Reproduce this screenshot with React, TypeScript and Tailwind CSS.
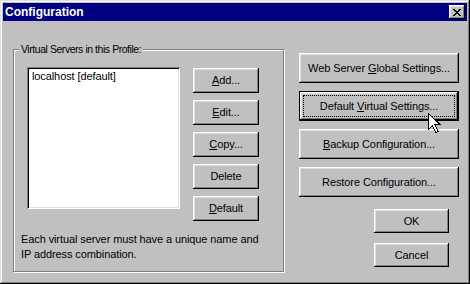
import React from "react";

const bevel =
  "shadow-[inset_-1px_-1px_#000,inset_1px_1px_#fff,inset_-2px_-2px_#808080,inset_2px_2px_#dfdfdf]";

function Btn({
  children,
  className = "",
}: {
  children: React.ReactNode;
  className?: string;
}) {
  return (
    <button
      className={`flex items-center justify-center bg-[#c0c0c0] text-black ${bevel} ${className}`}
    >
      {children}
    </button>
  );
}

function Cursor() {
  return (
    <svg
      className="absolute left-[428px] top-[113px]"
      width="13"
      height="21"
      viewBox="0 0 13 21"
    >
      <path
        d="M0.5 0.5 L0.5 16.5 L4.5 12.5 L7.5 19.5 L10 18.5 L7 11.5 L12 11.5 Z"
        fill="#fff"
        stroke="#000"
        strokeWidth="1"
        shapeRendering="crispEdges"
      />
    </svg>
  );
}

export default function App() {
  return (
    <div
      className="relative w-[470px] h-[284px] bg-[#c0c0c0] p-[3px] text-[11px] tracking-[-0.1px] text-black shadow-[inset_-1px_-1px_#000,inset_1px_1px_#dfdfdf,inset_-2px_-2px_#808080,inset_2px_2px_#fff]"
      style={{ fontFamily: '"Liberation Sans", Arial, sans-serif' }}
    >
      {/* Title bar */}
      <div className="flex h-[18px] items-center justify-between bg-[#000080] pl-[2px] pr-[2px]">
        <span className="text-[12px] font-bold tracking-normal text-white">Configuration</span>
        <button
          className={`flex h-[14px] w-[16px] items-center justify-center bg-[#c0c0c0] ${bevel}`}
        >
          <svg width="8" height="7" viewBox="0 0 8 7" shapeRendering="crispEdges">
            <path
              d="M0 0h2v1h-2zM6 0h2v1h-2zM1 1h2v1h-2zM5 1h2v1h-2zM2 2h4v1h-4zM3 3h2v1h-2zM2 4h4v1h-4zM1 5h2v1h-2zM5 5h2v1h-2zM0 6h2v1h-2zM6 6h2v1h-2z"
              fill="#000"
            />
          </svg>
        </button>
      </div>

      <div className="flex pl-[10px]">
        {/* Group box */}
        <div className="relative mt-[28px] h-[223px] w-[271px] border border-[#808080] pl-[7px] pt-[17px] shadow-[inset_1px_1px_#fff,1px_1px_#fff]">
          <span className="absolute -top-[8px] left-[5px] bg-[#c0c0c0] px-[2px] text-[10.5px] leading-[14px] tracking-[-0.45px]">
            Virtual Servers in this Profile:
          </span>
          <div className="flex">
            <div className="ml-[6px] h-[142px] w-[153px] bg-white px-[4px] pt-[2px] shadow-[inset_1px_1px_#808080,inset_-1px_-1px_#fff,inset_2px_2px_#000,inset_-2px_-2px_#dfdfdf]">
              <div className="pl-[1px] leading-[15px]">localhost [default]</div>
            </div>
            <div className="ml-[13px] mt-[1px] flex w-[66px] flex-col gap-[7px]">
              <Btn className="h-[25px]">
                <u>A</u>dd...
              </Btn>
              <Btn className="h-[25px]">
                <u>E</u>dit...
              </Btn>
              <Btn className="h-[25px]">
                <u>C</u>opy...
              </Btn>
              <Btn className="h-[25px]">Delete</Btn>
              <Btn className="h-[25px]">
                <u>D</u>efault
              </Btn>
            </div>
          </div>
          <p className="mt-[11px] leading-[15px]">
            Each virtual server must have a unique name and
            <br />
            IP address combination.
          </p>
        </div>

        {/* Right column */}
        <div className="ml-[15px] mt-[32px] flex w-[160px] flex-col">
          <div className="flex flex-col gap-[8px]">
            <Btn className="h-[30px]">
              Web Server&nbsp;<u>G</u>lobal Settings...
            </Btn>
            <button
              className={`h-[30px] border border-black bg-[#c0c0c0] p-[3px] ${bevel}`}
            >
              <span className="flex h-full w-full items-center justify-center border border-dotted border-black">
                Default&nbsp;<u>V</u>irtual Settings...
              </span>
            </button>
            <Btn className="h-[30px]">
              <u>B</u>ackup Configuration...
            </Btn>
            <Btn className="h-[30px]">Restore Configuration...</Btn>
          </div>
          <div className="ml-[75px] mt-[12px] flex flex-col gap-[10px]">
            <Btn className="h-[24px] w-[75px]">OK</Btn>
            <Btn className="h-[24px] w-[75px]">Cancel</Btn>
          </div>
        </div>
      </div>

      <Cursor />
    </div>
  );
}
